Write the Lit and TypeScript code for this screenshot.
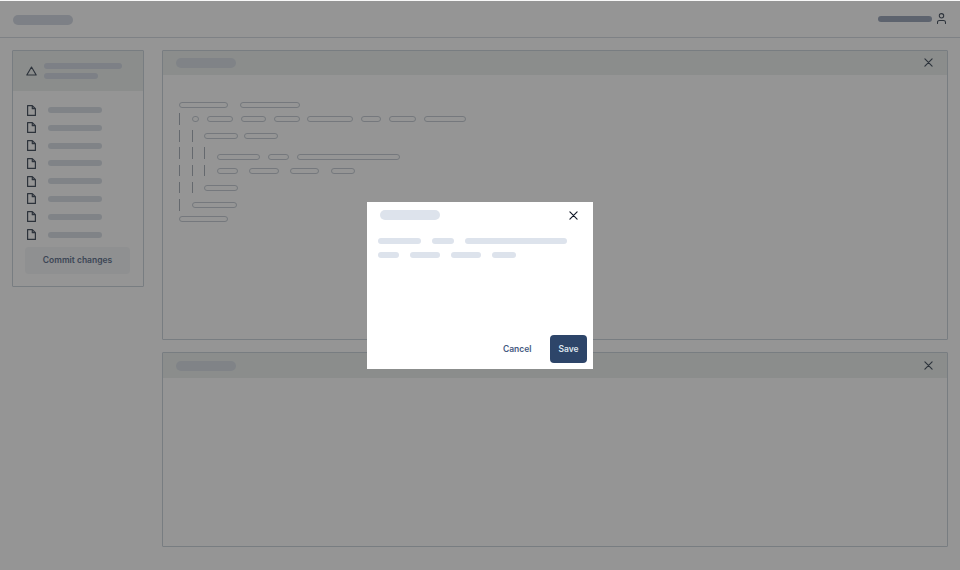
import { LitElement, html, css, svg } from "lit";
import { customElement } from "lit/decorators.js";

type Row = { gap: number; bars: number; raised?: boolean; pills: [number, number][] };

const rows: Row[] = [
  { gap: 0, bars: 0, pills: [[0.3, 49], [61, 60]] },
  { gap: 8, bars: 1, pills: [[13, 7], [28, 26], [62, 25], [95, 26], [128, 46], [182, 20], [210, 27], [245, 42]] },
  { gap: 11.3, bars: 2, pills: [[25, 34], [65, 34]] },
  { gap: 14.4, bars: 3, raised: true, pills: [[38, 43], [89, 21], [118, 103]] },
  { gap: 8.3, bars: 3, pills: [[38, 21], [70, 30], [111, 29], [152, 24]] },
  { gap: 11, bars: 2, pills: [[25, 34]] },
  { gap: 11.3, bars: 1, pills: [[13, 45]] },
  { gap: 8, bars: 0, pills: [[0.3, 49]] },
];

const closeIcon = svg`<svg width="9" height="9" viewBox="0 0 9 9" fill="none" stroke="currentColor" stroke-width="1.15" stroke-linecap="round"><path d="M.9.9l7.2 7.2M8.1.9L.9 8.1"/></svg>`;
const fileIcon = svg`<svg width="9" height="11" viewBox="0 0 9 11" fill="none" stroke="currentColor" stroke-width="1.2" stroke-linejoin="round"><path d="M.6.6h4.7l3.1 3.1v6.7H.6zM5.3.6v3.1h3.1"/></svg>`;
const triangleIcon = svg`<svg width="11" height="10" viewBox="0 0 11 10" fill="none" stroke="currentColor" stroke-width="1.15" stroke-linejoin="round"><path d="M5.5 1 10.2 9H.8z"/></svg>`;
const userIcon = svg`<svg width="9" height="11" viewBox="0 0 9 11" fill="none" stroke="currentColor" stroke-width="1.05" stroke-linecap="round"><circle cx="4.5" cy="2.8" r="2.2"/><path d="M.5 10.5V9.4a2 2 0 0 1 2-2h4a2 2 0 0 1 2 2v1.1"/></svg>`;

@customElement("app-root")
export class AppRoot extends LitElement {
  static styles = css`
    :host {
      display: block;
      position: relative;
      width: 960px;
      height: 570px;
      overflow: hidden;
      background: #f8f8f8;
      font-family: Inter, "Liberation Sans", sans-serif;
    }
    * { box-sizing: border-box; }
    .topbar {
      height: 38px;
      display: flex;
      align-items: center;
      justify-content: space-between;
      padding: 0 14px 0 13px;
      border-bottom: 1px solid #d3d8de;
    }
    .logo { width: 60px; height: 10px; margin-top: 3px; border-radius: 5px; background: #d0d6df; }
    .account { display: flex; align-items: center; gap: 5px; color: #4b5563; }
    .account-pill { width: 54px; height: 6px; border-radius: 3px; background: #9ba6b8; }
    .account svg { display: block; }
    .main {
      display: flex;
      gap: 18px;
      padding: 12px 12px 0;
    }
    .sidebar {
      width: 132px;
      height: 237px;
      flex: none;
      display: flex;
      flex-direction: column;
      border: 1px solid #c8d1d8;
      border-radius: 1px;
    }
    .alert {
      height: 40px;
      background: #e8ecea;
      display: flex;
      align-items: center;
      gap: 7px;
      padding-left: 13px;
      color: #4b5563;
    }
    .alert svg { margin-bottom: 1px; }
    .alert-lines { display: flex; flex-direction: column; gap: 4px; }
    .line { height: 6px; border-radius: 3px; background: #d0d6df; }
    .alert-a { width: 78px; }
    .alert-b { width: 54px; }
    .files {
      display: flex;
      flex-direction: column;
      gap: 5.8px;
      padding: 13px 0 0 14px;
      color: #4b5563;
    }
    .file { display: flex; align-items: center; gap: 12px; height: 12px; }
    .file svg { display: block; flex: none; }
    .file .line { width: 54px; background: #d5dbe2; }
    .commit {
      margin: 6px 13px 0 12px;
      height: 27px;
      border-radius: 4px;
      background: #eef0f2;
      display: flex;
      align-items: center;
      justify-content: center;
      font-size: 8.5px;
      font-weight: 600;
      color: #66758f;
    }
    .panels { flex: 1; display: flex; flex-direction: column; gap: 12px; }
    .panel { border: 1px solid #c8d1d8; border-radius: 1px; }
    .panel.code { height: 290px; }
    .panel.empty { height: 195px; }
    .panel-head {
      height: 24px;
      background: #e8ecea;
      display: flex;
      align-items: center;
      justify-content: space-between;
      padding: 0 14px 1px 13px;
      color: #4b5563;
    }
    .panel.empty .panel-head { height: 25px; padding-bottom: 0; }
    .panel-head svg { display: block; }
    .panel-title { width: 60px; height: 10px; margin-left: -0.5px; border-radius: 5px; background: #d5dbe2; }
    .code-body { padding: 27px 0 0 16px; }
    .row { position: relative; height: 6px; }
    .pill {
      position: absolute;
      top: 0;
      height: 6px;
      border-radius: 3px;
      border: 1px solid #c3c9d1;
    }
    .bar {
      position: absolute;
      top: -3px;
      width: 1px;
      height: 11.5px;
      background: #a8afb8;
    }
    .raised .bar { top: -6.4px; }
    .overlay {
      position: absolute;
      inset: 1px 0 0 0;
      background: rgba(0, 0, 0, 0.4);
      display: flex;
      align-items: center;
      justify-content: center;
    }
    .modal {
      width: 226px;
      height: 167px;
      margin-top: -1px;
      background: #fff;
      display: flex;
      flex-direction: column;
      padding: 7px 6px 6px 11px;
    }
    .modal-head {
      display: flex;
      align-items: center;
      justify-content: space-between;
      height: 11px;
      padding: 0 9px 0 2px;
      color: #111827;
      margin-top: 1px;
    }
    .modal-head svg { display: block; }
    .modal-title { width: 60px; height: 10px; border-radius: 5px; background: #dde3ec; }
    .modal-text { display: flex; flex-direction: column; gap: 8.3px; margin-top: 17px; }
    .modal-row { display: flex; gap: 11px; }
    .modal-row .line { background: #dde3ec; }
    .w43 { width: 43px; }
    .w22 { width: 22px; }
    .w102 { width: 102px; }
    .w21 { width: 21px; }
    .w30 { width: 30px; }
    .w24 { width: 24px; }
    .actions {
      margin-top: auto;
      display: flex;
      align-items: center;
      justify-content: flex-end;
      gap: 18.5px;
      font-size: 8.5px;
      font-weight: 600;
    }
    .cancel { color: #44597f; }
    .save {
      width: 37px;
      height: 28px;
      border-radius: 4px;
      background: #2d4569;
      color: #dfe5ee;
      display: flex;
      align-items: center;
      justify-content: center;
    }
  `;

  private renderRow(r: Row) {
    const bars = Array.from({ length: r.bars }, (_, i) => i);
    return html`<div class="row ${r.raised ? "raised" : ""}" style="margin-top:${r.gap}px">
      ${bars.map((i) => html`<span class="bar" style="left:${i * 12.6}px"></span>`)}
      ${r.pills.map(([x, w]) => html`<span class="pill" style="left:${x}px;width:${w}px"></span>`)}
    </div>`;
  }

  render() {
    const files = Array.from({ length: 8 }, (_, i) => i);
    return html`
      <div class="topbar">
        <div class="logo"></div>
        <div class="account"><div class="account-pill"></div>${userIcon}</div>
      </div>
      <div class="main">
        <aside class="sidebar">
          <div class="alert">
            ${triangleIcon}
            <div class="alert-lines">
              <div class="line alert-a"></div>
              <div class="line alert-b"></div>
            </div>
          </div>
          <div class="files">
            ${files.map(() => html`<div class="file">${fileIcon}<div class="line"></div></div>`)}
          </div>
          <div class="commit">Commit changes</div>
        </aside>
        <div class="panels">
          <section class="panel code">
            <div class="panel-head"><div class="panel-title"></div>${closeIcon}</div>
            <div class="code-body">${rows.map((r) => this.renderRow(r))}</div>
          </section>
          <section class="panel empty">
            <div class="panel-head"><div class="panel-title"></div>${closeIcon}</div>
          </section>
        </div>
      </div>
      <div class="overlay">
        <div class="modal">
          <div class="modal-head"><div class="modal-title"></div>${closeIcon}</div>
          <div class="modal-text">
            <div class="modal-row">
              <div class="line w43"></div>
              <div class="line w22"></div>
              <div class="line w102"></div>
            </div>
            <div class="modal-row">
              <div class="line w21"></div>
              <div class="line w30"></div>
              <div class="line w30"></div>
              <div class="line w24"></div>
            </div>
          </div>
          <div class="actions">
            <span class="cancel">Cancel</span>
            <div class="save">Save</div>
          </div>
        </div>
      </div>
    `;
  }
}
